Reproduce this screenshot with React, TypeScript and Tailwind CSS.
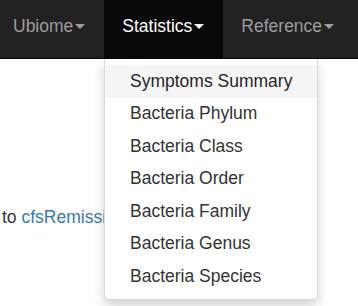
const navItems = [
  { label: 'Ubiome', active: false },
  { label: 'Statistics', active: true },
  { label: 'Reference', active: false },
]

const menuItems = [
  'Symptoms Summary',
  'Bacteria Phylum',
  'Bacteria Class',
  'Bacteria Order',
  'Bacteria Family',
  'Bacteria Genus',
  'Bacteria Species',
]

function Caret({ active }: { active: boolean }) {
  return (
    <span
      className={`ml-[2px] inline-block h-0 w-0 border-x-[5px] border-t-[5px] border-x-transparent align-middle ${
        active ? 'border-t-white' : 'border-t-[#9d9d9d]'
      }`}
    />
  )
}

export default function App() {
  return (
    <div className="relative h-[306px] w-[358px] overflow-hidden bg-white font-['Liberation_Sans',Arial,sans-serif] text-[17.5px] text-[#333]">
      {/* Navbar */}
      <nav className="flex h-[59px] bg-[#222] border-b border-[#080808]">
        {navItems.map((item, i) => (
          <div
            key={item.label}
            className={`flex h-full items-start pt-[14px] leading-[25px] pr-[18.5px] ${
              i === 0 ? 'pl-[13px]' : 'pl-[18.5px]'
            } ${item.active ? 'bg-[#080808] text-white' : 'text-[#9d9d9d]'}`}
          >
            <span>{item.label}</span>
            <span className="flex h-[25px] items-center">
              <Caret active={item.active} />
            </span>
          </div>
        ))}
      </nav>

      {/* Page body */}
      <div className="pl-[2px] pt-[146px] leading-[25px]">
        to <a className="text-[#337ab7]">cfsRemission</a>
      </div>

      {/* Dropdown */}
      <ul className="absolute left-[104px] top-[59px] w-[214px] rounded-b-[5px] border border-t-0 border-black/15 bg-white py-[6px] shadow-[0_6px_12px_rgba(0,0,0,0.175)]">
        {menuItems.map((label, i) => (
          <li
            key={label}
            className={`px-[25px] py-[3.75px] leading-[25px] whitespace-nowrap ${
              i === 0 ? 'bg-[#f5f5f5] text-[#262626]' : 'text-[#333]'
            }`}
          >
            {label}
          </li>
        ))}
      </ul>
    </div>
  )
}
